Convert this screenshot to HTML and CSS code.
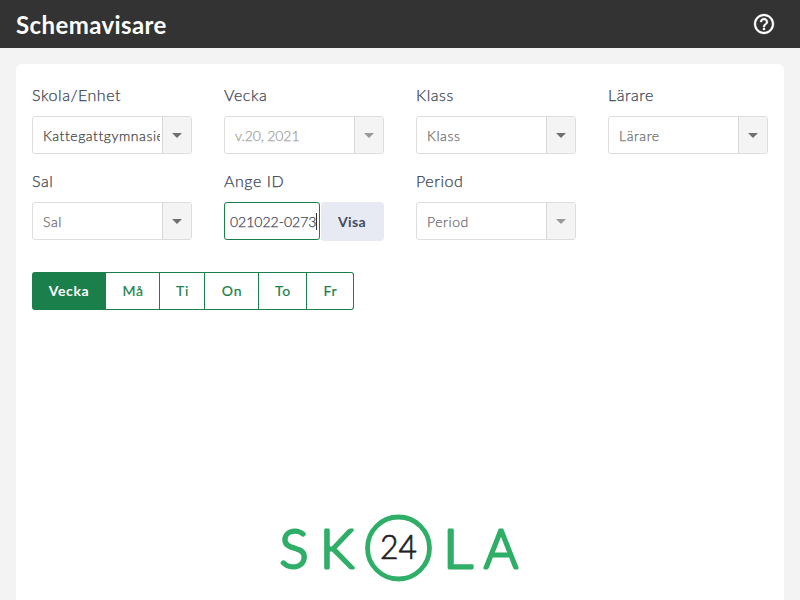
FILE: index.html
```html
<!DOCTYPE html>
<html lang="sv">
<head>
<meta charset="utf-8">
<title>Schemavisare</title>
<link rel="stylesheet" href="styles.css">
</head>
<body>
<header class="topbar">
  <h1 class="title">Schemavisare</h1>
  <svg class="help" viewBox="0 0 24 24" fill="#fff" stroke="#fff" stroke-width=".3"><path d="M11 18h2v-2h-2v2zm1-16C6.480 2 2 6.480 2 12s4.480 10 10 10 10-4.480 10-10S17.520 2 12 2zm0 18c-4.410 0-8-3.590-8-8s3.590-8 8-8 8 3.590 8 8-3.590 8-8 8zm0-14c-2.210 0-4 1.790-4 4h2c0-1.100.9-2 2-2s2 .9 2 2c0 2-3 1.750-3 5h2c0-2.250 3-2.500 3-5 0-2.210-1.790-4-4-4z"/></svg>
</header>
<main class="panel">
  <form class="filters">
    <div class="field"><label class="label">Skola/Enhet</label><div class="select filled"><span class="value"><span>Kattegattgymnasiet</span></span><span class="arrow"></span></div></div>
    <div class="field"><label class="label">Vecka</label><div class="select disabled"><span class="value"><span class="week">v.20, 2021</span></span><span class="arrow"></span></div></div>
    <div class="field"><label class="label">Klass</label><div class="select"><span class="value"><span>Klass</span></span><span class="arrow"></span></div></div>
    <div class="field"><label class="label">Lärare</label><div class="select"><span class="value"><span>Lärare</span></span><span class="arrow"></span></div></div>
    <div class="field"><label class="label">Sal</label><div class="select"><span class="value"><span>Sal</span></span><span class="arrow"></span></div></div>
    <div class="field"><label class="label">Ange ID</label><div class="idrow"><div class="idinput"><span>021022-0273</span><span class="caret"></span></div><button type="button" class="show">Visa</button></div></div>
    <div class="field"><label class="label">Period</label><div class="select muted"><span class="value"><span>Period</span></span><span class="arrow"></span></div></div>
  </form>
  <nav class="days">
    <button class="day active">Vecka</button><button class="day ma">Må</button><button class="day ti">Ti</button><button class="day on">On</button><button class="day to">To</button><button class="day fr">Fr</button>
  </nav>
  <svg class="logo" viewBox="0 0 240 72">
    <g class="letters">
      <text x="-0.500" y="56" textLength="29" lengthAdjust="spacingAndGlyphs">S</text>
      <text x="40" y="56" textLength="34" lengthAdjust="spacingAndGlyphs">K</text>
      <text x="163" y="56" textLength="30" lengthAdjust="spacingAndGlyphs">L</text>
      <text x="204" y="56" textLength="34" lengthAdjust="spacingAndGlyphs">A</text>
    </g>
    <circle cx="118.500" cy="36" r="31" fill="#fff" stroke="#2fae68" stroke-width="4.800"/>
    <text class="number" x="100" y="47" textLength="37" lengthAdjust="spacingAndGlyphs">24</text>
  </svg>
</main>
</body>
</html>
```
FILE: styles.css
```css
* { box-sizing: border-box; }
body {
  margin: 0;
  height: 600px;
  overflow: hidden;
  background: #f3f3f3;
  color: #3c4354;
  font-family: Lato, "Liberation Sans", sans-serif;
  font-size: 14px;
  font-weight: 300;
}
.topbar {
  height: 48px;
  padding: 0 24px 0 16px;
  display: flex;
  align-items: center;
  justify-content: space-between;
  background: #333;
}
.title {
  margin: 0;
  padding-top: 1px;
  color: #fff;
  font-size: 24px;
  line-height: 30px;
  font-weight: 700;
  letter-spacing: 0.4px;
}
.help { width: 24px; height: 24px; }
.panel {
  margin: 16px 16px 0;
  height: 560px;
  padding: 16px;
  background: #fff;
  border-radius: 6px;
  display: flex;
  flex-direction: column;
  align-items: flex-start;
}
.filters {
  width: 100%;
  display: grid;
  grid-template-columns: repeat(4, 160px);
  column-gap: 32px;
  row-gap: 12px;
  -webkit-text-stroke: 0.25px currentColor;
}
.field { height: 74px; }
.label {
  display: block;
  height: 36px;
  line-height: 30px;
  font-size: 16px;
  letter-spacing: 0.55px;
  white-space: nowrap;
}
.select {
  height: 38px;
  display: flex;
  border: 1px solid #ddd;
  border-radius: 3px;
  overflow: hidden;
  color: #6c6c6c;
}
.value {
  width: 129px;
  padding: 0 2px 0 10px;
  line-height: 38px;
}
.value > span { display: block; overflow: hidden; white-space: nowrap; letter-spacing: 0.55px; }
.value > .week { letter-spacing: -0.1px; }
.arrow {
  width: 29px;
  margin-left: auto;
  border-left: 1px solid #d6d6d6;
  background: #f4f4f4;
  display: flex;
  align-items: center;
  justify-content: center;
}
.arrow::after {
  content: "";
  border: 5px solid transparent;
  border-top-color: #707070;
  border-bottom: 0;
}
.filled { color: #444; }
.disabled { color: #a0a0a0; }
.disabled .arrow::after, .muted .arrow::after { border-top-color: #999; }
.idrow { display: flex; }
.idinput {
  width: 96px;
  height: 38px;
  padding-left: 5px;
  display: flex;
  align-items: center;
  border: 1px solid #1b7f4b;
  border-radius: 3px;
  white-space: nowrap;
}
.caret { width: 1px; height: 17px; background: #333; }
.show {
  width: 64px;
  height: 39px;
  padding: 0 1px 0 0;
  border: 0;
  border-left: 1px solid #fff;
  border-radius: 4px;
  background: #e7eaf3;
  color: #444b5a;
  font: 700 14px Lato, sans-serif;
  letter-spacing: 0.4px;
  -webkit-text-stroke: 0;
}
.days { display: flex; margin-top: 32px; }
.day {
  height: 38px;
  padding: 0 0 2px 1px;
  border: 1px solid #1b7f4b;
  border-left-width: 0;
  background: #fff;
  color: #1b7f4b;
  font: 400 14px Lato, sans-serif;
  letter-spacing: 0.7px;
  -webkit-text-stroke: 0.2px currentColor;
}
.active { width: 74px; border-radius: 3px 0 0 3px; background: #1b7f4b; color: #fff; font-weight: 700; letter-spacing: 0.6px; -webkit-text-stroke: 0; }
.ma { width: 54px; }
.ti { width: 45px; }
.on { width: 54px; }
.to { width: 48px; }
.fr { width: 47px; border-radius: 0 3px 3px 0; }
.logo { width: 240px; height: 72px; margin: 202px 0 0 248px; overflow: visible; }
.letters { font-size: 54px; fill: #2fae68; stroke: #2fae68; stroke-width: 2.8; stroke-linejoin: round; }
.number { font-size: 33px; fill: #222; stroke: #222; stroke-width: 0.7; stroke-linejoin: round; }
```
